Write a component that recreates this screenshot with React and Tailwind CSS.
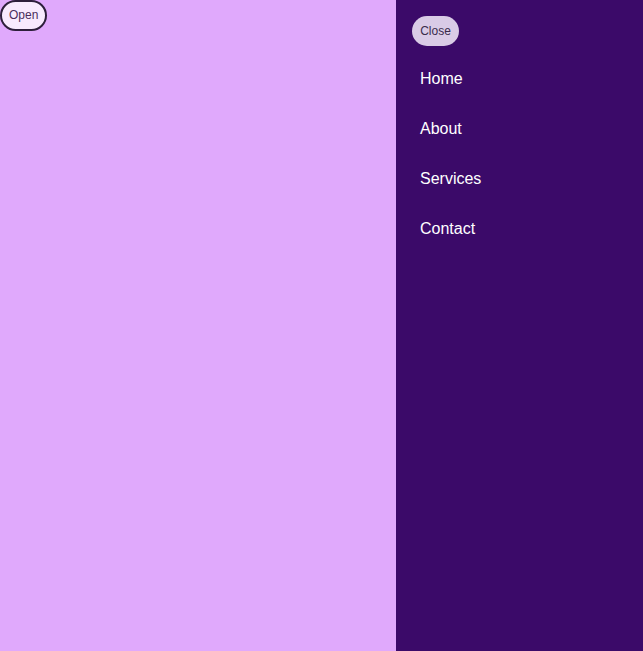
export default function App() {
  return (
    <div className="flex h-[651px] w-full bg-[#e0a9fc] font-['Liberation_Sans',Arial,sans-serif]">
      <div className="flex-1">
        <button className="h-[31px] rounded-full border-2 border-[#2e1f3b] bg-[#f8eafd] px-[7px] pb-[2px] text-[12px] text-[#4a2d5c]">
          Open
        </button>
      </div>
      <aside className="flex w-[247px] flex-col bg-[#3b0a69] p-4">
        <button className="h-[30px] w-[47px] rounded-full bg-[#d9cbe6] text-[12px] text-[#3a2c4b]">
          Close
        </button>
        <nav className="mt-[8px] flex flex-col">
          {['Home', 'About', 'Services', 'Contact'].map((item) => (
            <a key={item} href="#" className="flex h-[50px] items-center px-2 text-[16px] text-white">
              {item}
            </a>
          ))}
        </nav>
      </aside>
    </div>
  );
}
